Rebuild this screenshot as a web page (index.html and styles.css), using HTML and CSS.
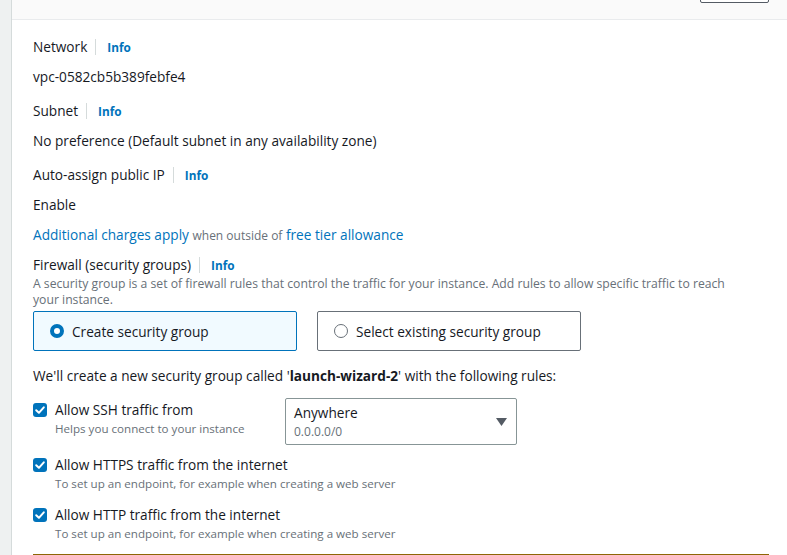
FILE: index.html
```html
<!DOCTYPE html>
<html>
<head>
<meta charset="utf-8">
<link rel="stylesheet" href="styles.css">
</head>
<body>
<div class="page">
  <div class="gutter"></div>
  <div class="panel">
    <div class="header">
      <div class="hbtn"></div>
    </div>
    <div class="content">
      <div class="field">
        <div class="label">Network <span class="divider"></span><a class="info">Info</a></div>
        <div class="value">vpc-0582cb5b389febfe4</div>
      </div>
      <div class="field">
        <div class="label">Subnet <span class="divider"></span><a class="info">Info</a></div>
        <div class="value">No preference (Default subnet in any availability zone)</div>
      </div>
      <div class="field">
        <div class="label">Auto-assign public IP <span class="divider"></span><a class="info">Info</a></div>
        <div class="value last">Enable</div>
      </div>
      <div class="charges"><a class="link">Additional charges apply</a> <span class="muted">when outside of</span> <a class="link">free tier allowance</a></div>
      <div class="label">Firewall (security groups) <span class="divider"></span><a class="info">Info</a></div>
      <div class="desc">A security group is a set of firewall rules that control the traffic for your instance. Add rules to allow specific traffic to reach your instance.</div>
      <div class="cards">
        <div class="card selected"><span class="radio on"></span>Create security group</div>
        <div class="card"><span class="radio"></span>Select existing security group</div>
      </div>
      <div class="note">We'll create a new security group called '<b>launch-wizard-2</b>' with the following rules:</div>
      <div class="rule first">
        <div class="rule-left">
          <span class="check"><svg width="14" height="14" viewBox="0 0 14 14"><path d="M3.2 7.2 L5.9 9.8 L10.8 4.3" fill="none" stroke="#fff" stroke-width="2" stroke-linecap="round" stroke-linejoin="round"/></svg></span>
          <div>
            <div class="rule-title">Allow SSH traffic from</div>
            <div class="rule-sub">Helps you connect to your instance</div>
          </div>
        </div>
        <div class="select">
          <div>
            <div class="sel-main">Anywhere</div>
            <div class="sel-sub">0.0.0.0/0</div>
          </div>
          <svg class="caret" width="11" height="8" viewBox="0 0 11 8"><path d="M0 0 H11 L5.5 8 Z" fill="#545b64"/></svg>
        </div>
      </div>
      <div class="rule second">
        <div class="rule-left">
          <span class="check"><svg width="14" height="14" viewBox="0 0 14 14"><path d="M3.2 7.2 L5.9 9.8 L10.8 4.3" fill="none" stroke="#fff" stroke-width="2" stroke-linecap="round" stroke-linejoin="round"/></svg></span>
          <div>
            <div class="rule-title">Allow HTTPS traffic from the internet</div>
            <div class="rule-sub">To set up an endpoint, for example when creating a web server</div>
          </div>
        </div>
      </div>
      <div class="rule third">
        <div class="rule-left">
          <span class="check"><svg width="14" height="14" viewBox="0 0 14 14"><path d="M3.2 7.2 L5.9 9.8 L10.8 4.3" fill="none" stroke="#fff" stroke-width="2" stroke-linecap="round" stroke-linejoin="round"/></svg></span>
          <div>
            <div class="rule-title">Allow HTTP traffic from the internet</div>
            <div class="rule-sub">To set up an endpoint, for example when creating a web server</div>
          </div>
        </div>
      </div>
      <div class="alert"></div>
    </div>
  </div>
</div>
</body>
</html>
```

FILE: styles.css
```css
html, body {
  margin: 0;
  padding: 0;
  background: #f2f3f3;
  font-family: "Open Sans", "Noto Sans", sans-serif;
  color: #16191f;
  font-size: 13.65px;
}
.page {
  display: flex;
  height: 555px;
  overflow: hidden;
}
.gutter {
  width: 11px;
  flex: none;
  background: #eef1f1;
}
.panel {
  flex: 1;
  background: #fff;
  border-left: 1px solid #d5dbdb;
}
.header {
  height: 19px;
  background: #fafafa;
  border-bottom: 1px solid #e9ebed;
  display: flex;
  justify-content: flex-end;
  padding-right: 18px;
  overflow: hidden;
}
.hbtn {
  width: 67px;
  height: 30px;
  margin-top: -29px;
  border: 1px solid #545b64;
  border-radius: 2px;
  background: #fff;
}
.content {
  padding: 16px 18px 0 21px;
}
.label {
  display: flex;
  align-items: center;
  height: 22px;
  line-height: 22px;
}
.divider {
  display: inline-block;
  width: 1px;
  height: 16px;
  background: #d5dbdb;
  margin-left: 8px;
  margin-right: 11px;
}
.info {
  color: #0073bb;
  font-weight: 700;
  font-size: 11.8px;
}
.field .value {
  margin-top: 8px;
  margin-bottom: 12px;
  line-height: 22px;
}
.field .value.last {
  margin-bottom: 8px;
}
.charges {
  line-height: 22px;
  margin-bottom: 7px;
}
.link {
  color: #0073bb;
}
.muted {
  color: #687078;
  font-size: 12px;
}
.desc {
  font-size: 12.2px;
  line-height: 15.5px;
  color: #687078;
  max-width: 700px;
}
.cards {
  display: flex;
  gap: 20px;
  margin-top: 4px;
}
.card {
  height: 38px;
  border: 1px solid #687078;
  border-radius: 2px;
  display: flex;
  align-items: center;
  padding-left: 16px;
  box-sizing: content-box;
  width: 246px;
}
.card.selected {
  border-color: #0073bb;
  background: #f1faff;
}
.radio {
  width: 14px;
  height: 14px;
  border-radius: 50%;
  box-sizing: border-box;
  border: 1.5px solid #687078;
  margin-right: 8px;
  flex: none;
  background: #fff;
}
.radio.on {
  border: 4px solid #0073bb;
}
.note {
  margin-top: 14px;
  line-height: 22px;
}
.note b {
  font-weight: 700;
}
.rule {
  display: flex;
}
.rule.first {
  margin-top: 11px;
}
.rule.first .rule-left {
  padding-top: 1px;
}
.rule.second {
  margin-top: 9px;
}
.rule.third {
  margin-top: 12px;
}
.rule-left {
  display: flex;
  width: 252px;
  flex: none;
  box-sizing: border-box;
}
.check {
  width: 14px;
  height: 14px;
  border-radius: 3px;
  background: #0073bb;
  margin-top: 4px;
  margin-right: 8px;
  flex: none;
  display: flex;
}
.rule-title {
  line-height: 22px;
  white-space: nowrap;
}
.rule-sub {
  font-size: 11.6px;
  line-height: 16px;
  color: #687078;
  white-space: nowrap;
}
.select {
  border: 1px solid #879596;
  border-radius: 2px;
  display: flex;
  align-items: center;
  justify-content: space-between;
  padding: 0 11px 0 8px;
  box-sizing: border-box;
  width: 232px;
  height: 47px;
}
.sel-main {
  line-height: 19px;
}
.sel-sub {
  font-size: 12px;
  line-height: 19px;
  color: #687078;
}
.caret {
  margin-top: 1px;
  margin-right: -2px;
}
.alert {
  margin-top: 12px;
  height: 10px;
  border-top: 1px solid #8d6605;
}
```
